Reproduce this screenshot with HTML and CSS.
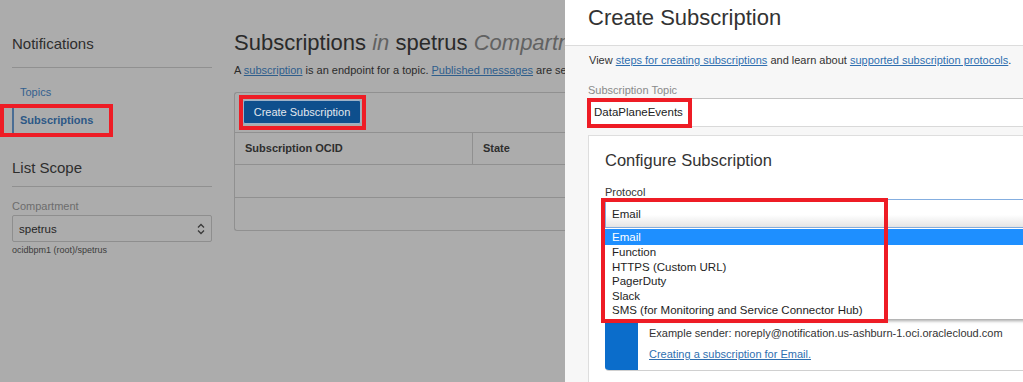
FILE: index.html
```html
<!DOCTYPE html>
<html lang="en">
<head>
<meta charset="utf-8">
<title>Create Subscription</title>
<link rel="stylesheet" href="styles.css">
</head>
<body>
<div class="app">
  <div class="page">
    <aside class="sidebar">
      <h2 class="side-title">Notifications</h2>
      <nav class="side-nav">
        <a class="nav-item">Topics</a>
        <a class="nav-item active">Subscriptions<span class="annot annot-nav"></span></a>
      </nav>
      <h2 class="side-title scope-title">List Scope</h2>
      <div class="field-label">Compartment</div>
      <div class="comp-select">
        <span>spetrus</span>
        <svg class="updown" width="8" height="12" viewBox="0 0 8 12"><path d="M1 4.5 L4 1.5 L7 4.5 M1 7.5 L4 10.5 L7 7.5" fill="none" stroke="#3a3a3a" stroke-width="1.3"/></svg>
      </div>
      <div class="comp-hint">ocidbpm1 (root)/spetrus</div>
    </aside>
    <main class="main">
      <h1 class="main-title">Subscriptions <em>in</em> spetrus <em>Compartment</em></h1>
      <p class="main-desc">A <a>subscription</a> is an endpoint for a topic. <a>Published messages</a> are sent to each subscription for the topic.</p>
      <div class="table-box">
        <div class="toolbar">
          <button class="btn-primary">Create Subscription<span class="annot annot-btn"></span></button>
        </div>
        <div class="trow thead">
          <div class="cell c1">Subscription OCID</div>
          <div class="cell c2">State</div>
        </div>
        <div class="trow"></div>
        <div class="trow"></div>
      </div>
    </main>
  </div>

  <section class="panel">
    <header class="panel-head">
      <h1>Create Subscription</h1>
    </header>
    <div class="panel-body">
      <p class="intro">View <a>steps for creating subscriptions</a> and learn about <a>supported subscription protocols</a>.</p>
      <div class="p-label">Subscription Topic</div>
      <div class="topic-input">DataPlaneEvents<span class="annot annot-topic"></span></div>

      <div class="card">
        <h2 class="card-title">Configure Subscription</h2>
        <div class="c-label">Protocol</div>
        <div class="select-wrap">
          <div class="select">Email</div>
          <ul class="options">
            <li class="sel">Email</li>
            <li>Function</li>
            <li>HTTPS (Custom URL)</li>
            <li>PagerDuty</li>
            <li>Slack</li>
            <li>SMS (for Monitoring and Service Connector Hub)</li>
          </ul>
          <span class="annot annot-select"></span>
        </div>
        <div class="hidden-field"></div>
        <div class="info">
          <div class="stripe">
            <svg width="14" height="14" viewBox="0 0 14 14"><circle cx="7" cy="7" r="6" fill="none" stroke="#fff" stroke-width="1.4"/><path d="M7 6 V10.5 M7 3.5 V4.8" stroke="#fff" stroke-width="1.4"/></svg>
          </div>
          <div class="info-body">
            <div class="info-spacer"></div>
            <p>Example sender: noreply@notification.us-ashburn-1.oci.oraclecloud.com</p>
            <p><a>Creating a subscription for Email.</a></p>
          </div>
        </div>
      </div>
    </div>
  </section>
</div>
</body>
</html>
```
FILE: styles.css
```css
* { box-sizing: border-box; margin: 0; padding: 0; }

body {
  font-family: "Liberation Sans", Arial, sans-serif;
  width: 1023px;
  height: 382px;
  overflow: hidden;
  background: #acacac;
}

.app { display: flex; height: 382px; }

/* dimmed page */
.page {
  width: 565px;
  flex: none;
  overflow: hidden;
  display: flex;
  background: #acacac;
  color: #2b2b2b;
}

.sidebar { width: 200px; margin-left: 12px; flex: none; padding-top: 35px; }

.side-title {
  font-size: 15px;
  line-height: 18px;
  font-weight: normal;
  color: #2e2e2e;
  padding-bottom: 14px;
  border-bottom: 1px solid #909090;
}

.side-nav { display: flex; flex-direction: column; margin-top: 16px; }

.nav-item {
  display: block;
  font-size: 11px;
  line-height: 16px;
  padding-left: 8px;
  color: #33608f;
}
.nav-item + .nav-item { margin-top: 8px; }
.nav-item.active {
  position: relative;
  font-weight: bold;
  line-height: 17px;
  padding: 4px 0 4px 6px;
  border-left: 2px solid #4a6d94;
  color: #2d5886;
}

.scope-title { margin-top: 26px; padding-bottom: 9px; }

.field-label {
  margin-top: 12px;
  font-size: 11px;
  line-height: 14px;
  color: #6c6c6c;
}

.comp-select {
  margin-top: 2px;
  height: 27px;
  border: 1px solid #8e8e8e;
  border-radius: 2px;
  display: flex;
  align-items: center;
  justify-content: space-between;
  padding: 0 6px 0 6px;
  font-size: 11.5px;
  color: #262626;
}

.comp-hint {
  margin-top: 2px;
  font-size: 9px;
  line-height: 12px;
  color: #3c3c3c;
}

.main { flex: none; width: 640px; padding: 30px 0 0 22px; }

.main-title {
  font-size: 22px;
  line-height: 26px;
  font-weight: normal;
  color: #2a2a2a;
  white-space: nowrap;
}
.main-title em { color: #626262; }

.main-desc {
  margin-top: 7px;
  font-size: 11px;
  line-height: 14px;
  color: #2b2b2b;
  white-space: nowrap;
}
.main-desc a { color: #2f5e8c; text-decoration: underline; }

.table-box {
  margin-top: 15px;
  width: 600px;
  border: 1px solid #909090;
  border-right: none;
  border-radius: 3px 0 0 3px;
}

.toolbar { padding: 7px 0 8px 8px; }

.btn-primary {
  position: relative;
  display: block;
  width: 118px;
  height: 24px;
  background: #0e4f8d;
  border: 1px solid #9db2c8;
  border-radius: 2px;
  color: #e2e8ee;
  font-family: "Liberation Sans", Arial, sans-serif;
  font-size: 11px;
}

.trow { height: 33px; border-top: 1px solid #909090; display: flex; }
.thead { height: 32px; }
.cell {
  font-size: 11px;
  font-weight: bold;
  color: #2e2e2e;
  line-height: 31px;
  padding-left: 10px;
}
.c1 { width: 238px; border-right: 1px solid #909090; }

/* side panel */
.panel {
  flex: 1;
  min-width: 0;
  background: #f7f7f7;
  display: flex;
  flex-direction: column;
  overflow: hidden;
}

.panel-head {
  height: 46px;
  flex: none;
  background: #fff;
  border-bottom: 1px solid #dcdcdc;
  padding: 5px 23px 0;
}
.panel-head h1 {
  font-size: 22px;
  line-height: 26px;
  font-weight: normal;
  color: #333;
}

.panel-body { padding: 7px 0 0 22px; }

.intro {
  font-size: 11px;
  line-height: 14px;
  color: #333;
  padding-left: 2px;
  white-space: nowrap;
}
.intro a, .info-body a { color: #2f6fb0; text-decoration: underline; }

.p-label {
  margin-top: 16px;
  padding-left: 1px;
  font-size: 11px;
  line-height: 14px;
  color: #8a8a8a;
}

.topic-input {
  position: relative;
  margin-top: 1px;
  height: 29px;
  background: #fff;
  border-top: 1px solid #c4c4c4;
  border-bottom: 1px solid #d9d9d9;
  padding-left: 7px;
  font-size: 11.5px;
  line-height: 27px;
  color: #222;
}

.card {
  margin: 8px -20px 0 1px;
  background: #fff;
  border: 1px solid #dedede;
  padding: 14px 0 0 16px;
  height: 260px;
}

.card-title {
  font-size: 16.5px;
  line-height: 20px;
  font-weight: normal;
  color: #333;
}

.c-label {
  margin-top: 15px;
  font-size: 11px;
  line-height: 14px;
  color: #333;
}

.select-wrap { position: relative; }

.select {
  height: 29px;
  border: 1px solid #84aee0;
  background: linear-gradient(#fff 55%, #e4e4e4);
  padding-left: 6px;
  font-size: 11.5px;
  line-height: 28px;
  color: #222;
}

.options {
  position: absolute;
  top: 29px;
  left: 0;
  right: 0;
  list-style: none;
  background: #fff;
  padding: 1px 0;
  box-shadow: 0 2px 3px rgba(0, 0, 0, 0.35);
  z-index: 2;
}
.options li {
  height: 14.6px;
  line-height: 14.6px;
  padding-left: 7px;
  font-size: 11.5px;
  color: #1e1e1e;
  white-space: nowrap;
}
.options li.sel {
  height: 16px;
  line-height: 16px;
  background: #1e8fff;
  color: #fff;
}

.hidden-field { height: 43px; margin-top: 14px; }

.info {
  margin-top: 13px;
  display: flex;
  border: 1px solid #d0d0d0;
  border-left: none;
  border-radius: 0 0 0 4px;
  overflow: hidden;
  background: #fff;
}
.stripe {
  width: 33px;
  flex: none;
  background: #0b6dcb;
  display: flex;
  justify-content: center;
  align-items: flex-start;
  padding-top: 9px;
}
.info-body {
  padding: 3px 11px 5px;
  font-size: 11px;
  line-height: 21px;
  color: #333;
  white-space: nowrap;
}
.info-spacer { height: 21px; }

/* red annotation boxes */
.annot {
  position: absolute;
  border: 4px solid #ee1c25;
  pointer-events: none;
  z-index: 5;
}
.annot-nav { left: -14px; top: -4px; width: 113px; height: 33px; }
.annot-btn { left: -5px; top: -6px; width: 127px; height: 35px; }
.annot-topic { left: 0; top: -1px; width: 105px; height: 30px; }
.annot-select { left: -4px; top: -1px; width: 287px; height: 125px; }
```
